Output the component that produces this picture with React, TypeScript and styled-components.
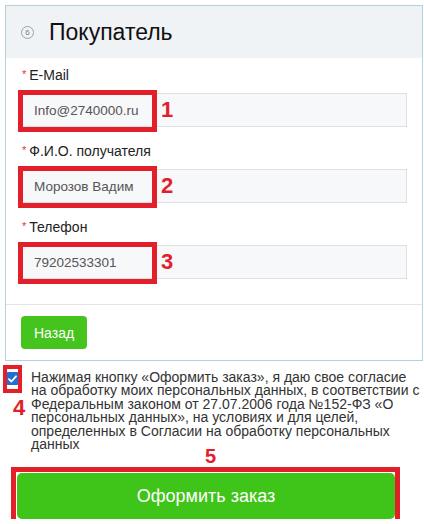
import styled, { createGlobalStyle } from 'styled-components';

const GlobalStyle = createGlobalStyle`
  body {
    margin: 0;
    background: #fff;
    font-family: 'Liberation Sans', Arial, sans-serif;
  }
  * {
    box-sizing: border-box;
  }
`;

const fields = [
  { label: 'E-Mail', value: 'Info@2740000.ru', mark: '1' },
  { label: 'Ф.И.О. получателя', value: 'Морозов Вадим', mark: '2' },
  { label: 'Телефон', value: '79202533301', mark: '3' },
];

const consentLines = [
  'Нажимая кнопку «Оформить заказ», я даю свое согласие',
  'на обработку моих персональных данных, в соответствии с',
  'Федеральным законом от 27.07.2006 года №152-ФЗ «О',
  'персональных данных», на условиях и для целей,',
  'определенных в Согласии на обработку персональных',
  'данных',
];

export default function App() {
  return (
    <StyledPage>
      <GlobalStyle />
      <StyledPanel>
        <StyledHeader>
          <StepBadge>6</StepBadge>
          <StyledTitle>Покупатель</StyledTitle>
        </StyledHeader>
        <StyledBody>
          {fields.map((field) => (
            <StyledField key={field.label}>
              <StyledLabel>
                <Required>*</Required>
                {field.label}
              </StyledLabel>
              <InputWrap>
                <StyledInput defaultValue={field.value} readOnly />
                <InputHighlight />
                <InputMarker>{field.mark}</InputMarker>
              </InputWrap>
            </StyledField>
          ))}
        </StyledBody>
        <StyledFooter>
          <BackButton>Назад</BackButton>
        </StyledFooter>
      </StyledPanel>
      <ConsentRow>
        <CheckColumn>
          <CheckBox>
            <svg width="9" height="8" viewBox="0 0 9 8">
              <path
                d="M1 4.2 L3.4 6.5 L8 1.3"
                fill="none"
                stroke="#fff"
                strokeWidth="1.8"
                strokeLinecap="round"
                strokeLinejoin="round"
              />
            </svg>
          </CheckBox>
          <ConsentMarker>4</ConsentMarker>
          <CheckHighlight />
        </CheckColumn>
        <ConsentText>
          {consentLines.map((line) => (
            <div key={line}>{line}</div>
          ))}
        </ConsentText>
      </ConsentRow>
      <SubmitWrap>
        <SubmitMarker>5</SubmitMarker>
        <SubmitButton>Оформить заказ</SubmitButton>
        <SubmitHighlight />
      </SubmitWrap>
    </StyledPage>
  );
}

const StyledPage = styled.div`
  width: 424px;
  padding: 5px 1px 0 5px;
`;

const StyledPanel = styled.div`
  width: 418px;
  border: 1px solid #b4d2db;
`;

const StyledHeader = styled.div`
  display: flex;
  align-items: center;
  gap: 15px;
  height: 52px;
  padding-left: 15px;
  background: #f0f3f6;
`;

const StepBadge = styled.span`
  display: flex;
  align-items: center;
  justify-content: center;
  width: 13px;
  height: 13px;
  border: 1px solid #a0a0a0;
  border-radius: 50%;
  font-size: 8px;
  color: #7a7a7a;
`;

const StyledTitle = styled.h2`
  margin: 0;
  font-size: 23px;
  font-weight: normal;
  line-height: 1;
  color: #111;
`;

const StyledBody = styled.div`
  display: flex;
  flex-direction: column;
  gap: 17px;
  padding: 10px 15px 25px 14px;
`;

const StyledField = styled.div`
  display: flex;
  flex-direction: column;
  gap: 9px;
`;

const StyledLabel = styled.label`
  padding-left: 2px;
  font-size: 14px;
  line-height: 15px;
  color: #222;
`;

const Required = styled.span`
  position: relative;
  top: -2px;
  margin-right: 3px;
  font-size: 11px;
  color: #e0353a;
`;

const InputWrap = styled.div`
  position: relative;
`;

const StyledInput = styled.input`
  display: block;
  width: 100%;
  height: 34px;
  padding: 0 13px;
  border: 1px solid #dcdfe3;
  background: #f7f8fa;
  font-family: 'Liberation Sans', Arial, sans-serif;
  font-size: 13.5px;
  color: #555;
  outline: none;
`;

const InputHighlight = styled.div`
  position: absolute;
  left: -2px;
  top: -3px;
  width: 139px;
  height: 42px;
  border: 5px solid #e3202a;
  pointer-events: none;
`;

const InputMarker = styled.span`
  position: absolute;
  left: 141px;
  top: 50%;
  transform: translateY(-50%);
  font-size: 22px;
  font-weight: bold;
  line-height: 1;
  color: #e3202a;
`;

const StyledFooter = styled.div`
  padding: 11px 15px 11px;
  border-top: 1px solid #e2e6ea;
`;

const BackButton = styled.button`
  height: 33px;
  padding: 0 13px;
  border: none;
  border-radius: 4px;
  background: #44c41c;
  font-family: 'Liberation Sans', Arial, sans-serif;
  font-size: 14px;
  color: #fff;
`;

const ConsentRow = styled.div`
  display: flex;
  margin-top: 10px;
`;

const CheckColumn = styled.div`
  position: relative;
  display: flex;
  flex-direction: column;
  align-items: flex-start;
  width: 26px;
  flex-shrink: 0;
  padding-left: 1px;
`;

const CheckBox = styled.span`
  display: flex;
  align-items: center;
  justify-content: center;
  width: 13px;
  height: 13px;
  margin-top: 1px;
  border-radius: 2px;
  background: #1f6fd6;
`;

const CheckHighlight = styled.div`
  position: absolute;
  left: -2px;
  top: -6px;
  width: 19px;
  height: 28px;
  border: 4px solid #e3202a;
  pointer-events: none;
`;

const ConsentMarker = styled.span`
  margin: 12px 0 0 7px;
  font-size: 22px;
  font-weight: bold;
  line-height: 1;
  color: #e3202a;
`;

const ConsentText = styled.div`
  font-size: 14px;
  line-height: 13.4px;
  color: #333;
  white-space: nowrap;
`;

const SubmitWrap = styled.div`
  position: relative;
  width: 378px;
  margin: 22px 0 0 12px;
`;

const SubmitButton = styled.button`
  display: block;
  width: 100%;
  height: 46px;
  border: none;
  border-radius: 5px;
  background: #3fc41a;
  font-family: 'Liberation Sans', Arial, sans-serif;
  font-size: 18px;
  color: #fff;
`;

const SubmitHighlight = styled.div`
  position: absolute;
  left: -6px;
  top: -6px;
  right: -5px;
  bottom: -6px;
  border: 5px solid #e3202a;
  pointer-events: none;
`;

const SubmitMarker = styled.span`
  position: absolute;
  left: 188px;
  top: -27px;
  font-size: 20px;
  font-weight: bold;
  line-height: 1;
  color: #e3202a;
`;
